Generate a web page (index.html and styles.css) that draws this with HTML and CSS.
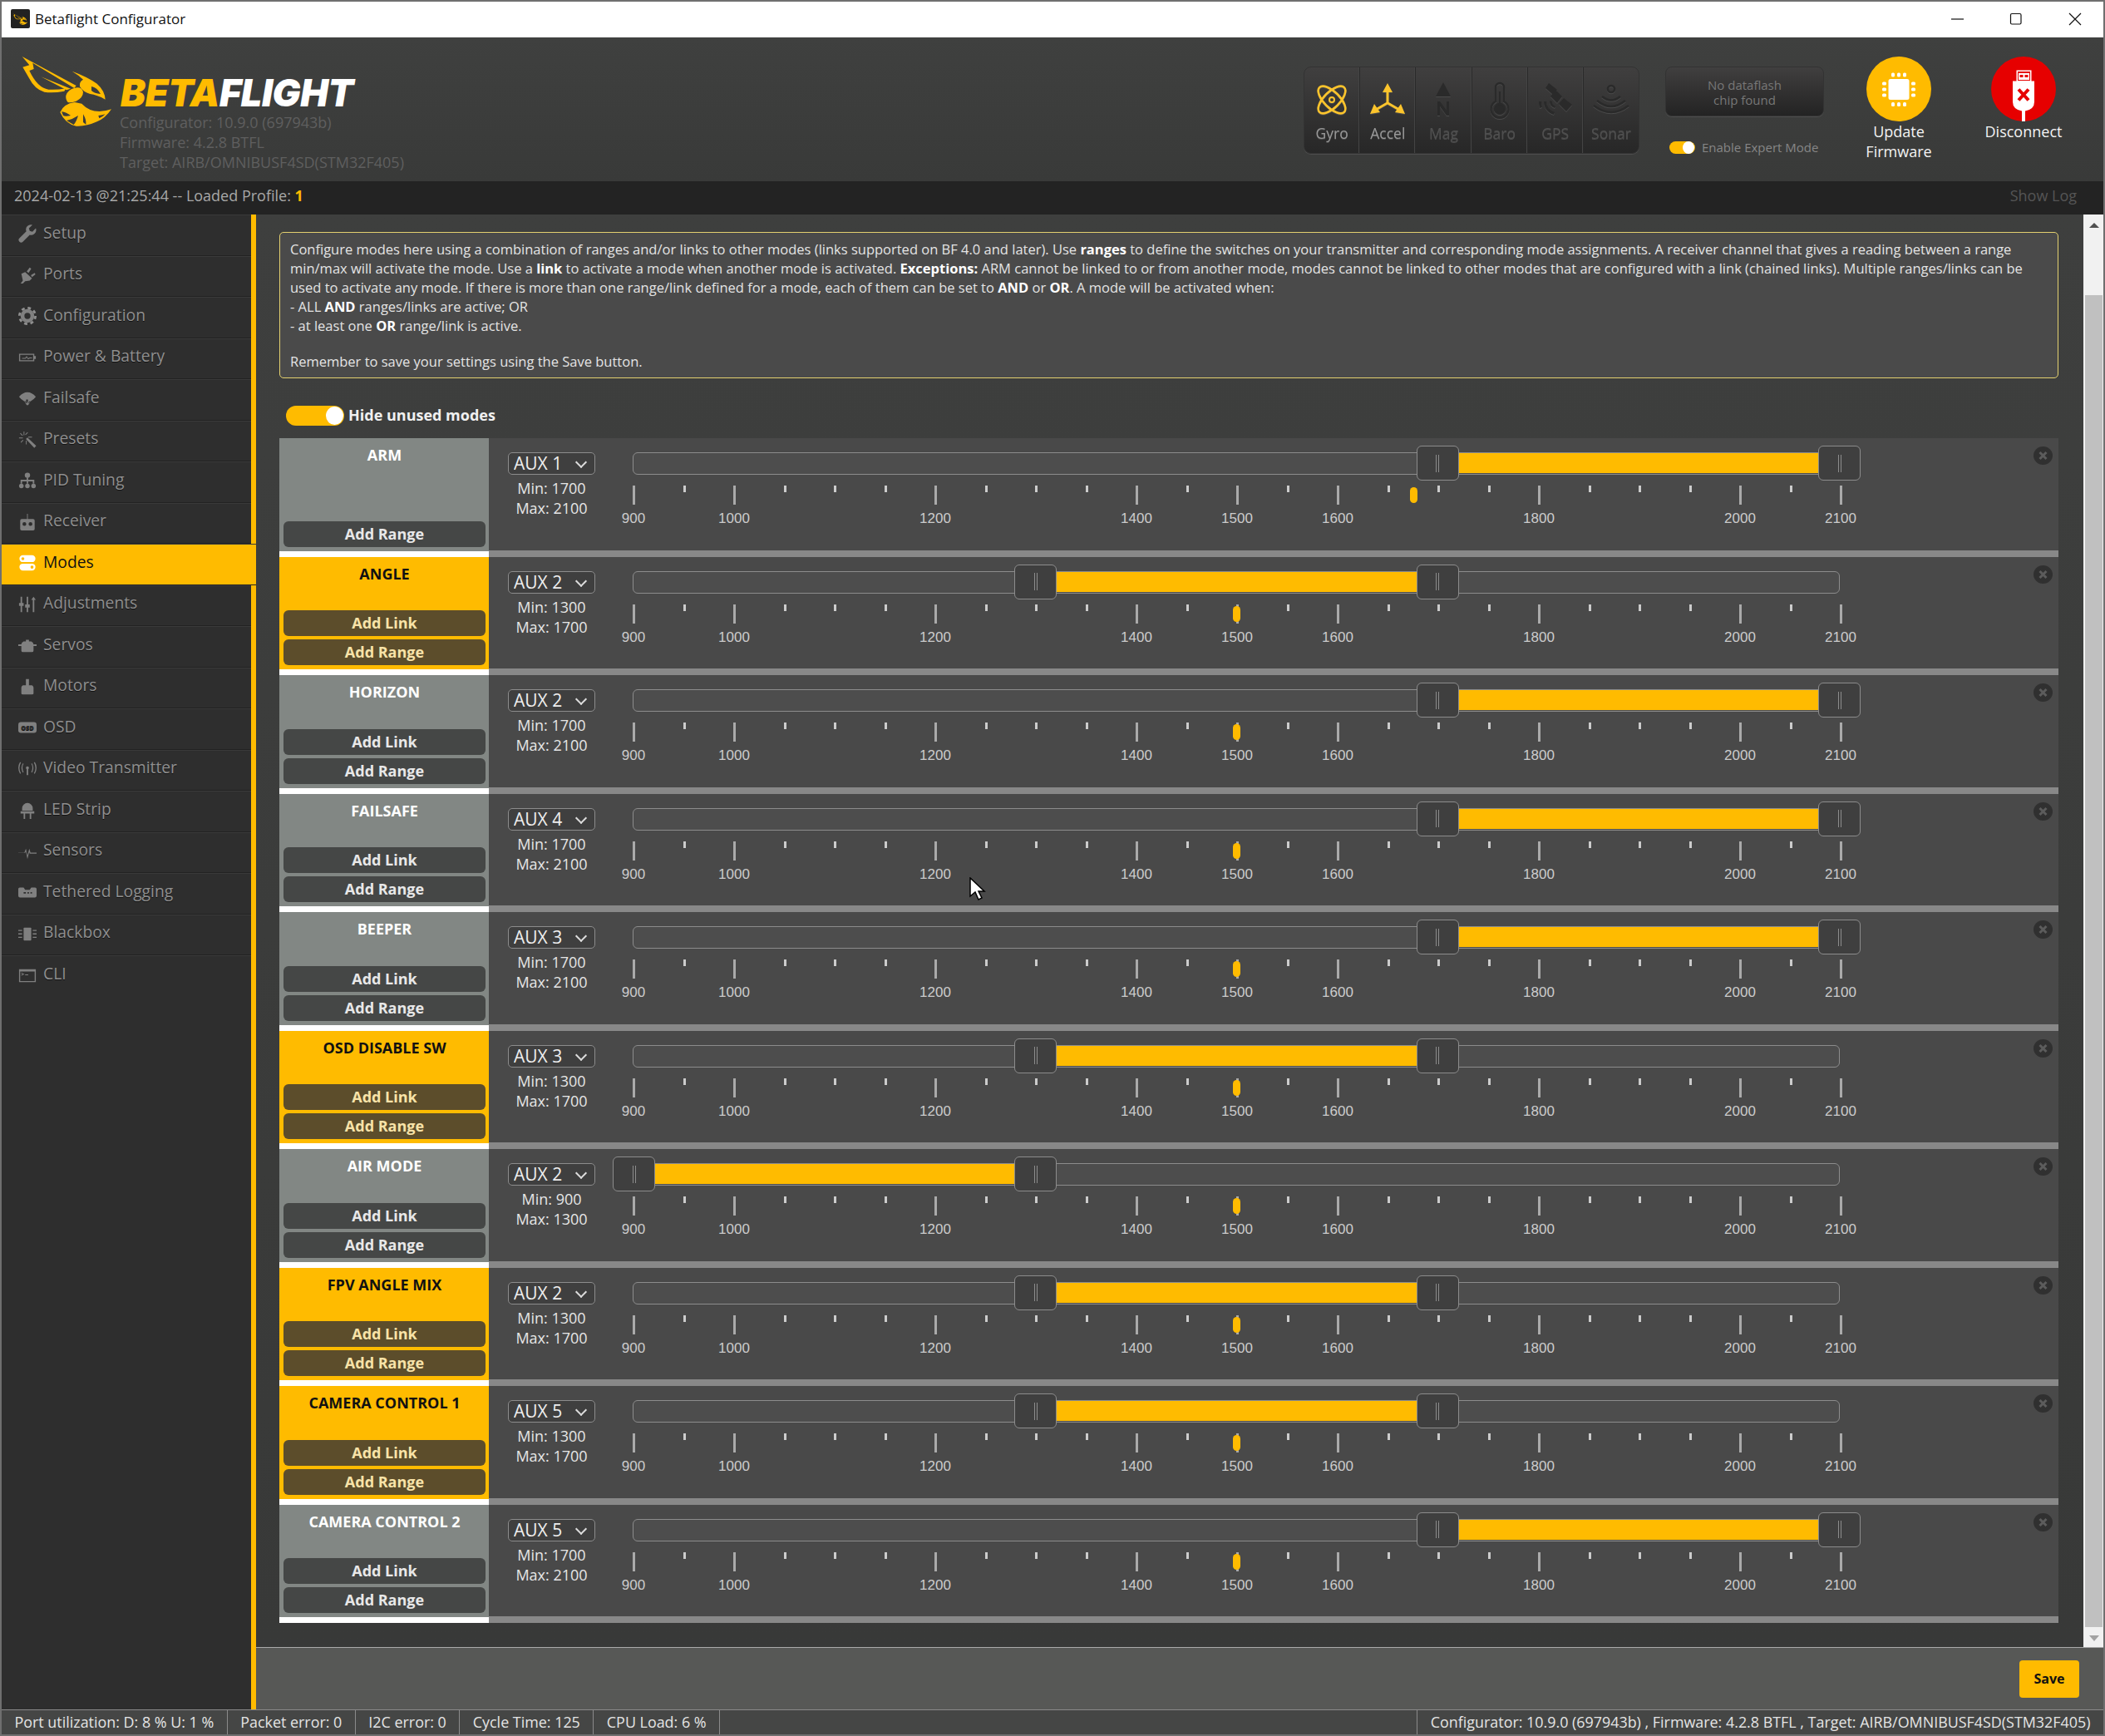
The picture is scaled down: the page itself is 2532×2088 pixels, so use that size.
FILE: index.html
```html
<!DOCTYPE html>
<html lang="en">
<head>
  <meta charset="UTF-8" />
  <title>Betaflight Configurator</title>
  <link rel="stylesheet" href="styles.css">
</head>
<body>

  <div class="titlebar">
    <span class="app-icon">
      <svg viewBox="0 0 375 300" width="20" height="16"><use href="#bee"/></svg>
    </span>
    <span class="app-title">Betaflight Configurator</span>
    <span class="win-btn"><svg width="16" height="16" viewBox="0 0 16 16"><path d="M0 8h15" stroke="#111" stroke-width="1.2"/></svg></span>
    <span class="win-btn"><svg width="16" height="16" viewBox="0 0 16 16"><rect x="1.5" y="1.5" width="12.5" height="12.5" rx="1.5" fill="none" stroke="#111" stroke-width="1.2"/></svg></span>
    <span class="win-btn"><svg width="16" height="16" viewBox="0 0 16 16"><path d="M1 1l14 14M15 1L1 15" stroke="#111" stroke-width="1.2"/></svg></span>
  </div>

  <header class="topbar">
    <svg class="bee" viewBox="0 0 375 300" width="125" height="100">
      <defs>
        <g id="bee">
          <path fill="#ffbb00" d="M20 27L215 132 208 141 58 50 62 72 46 78Q75 140 115 146 145 148 178 142L172 152Q130 160 100 155 65 145 45 105L22 65 46 58Z"/>
          <path fill="#ffbb00" d="M88 100L195 143 180 148Z"/>
          <path fill="#ffbb00" d="M200 80Q255 100 290 125 318 150 320 182 290 165 265 162 240 155 228 135 225 118 240 110 225 95 200 80Z"/>
          <path fill="#3b3c3b" d="M270 135Q290 138 303 162 280 160 270 150Z"/>
          <path fill="#ffbb00" d="M178 168Q185 145 210 140 235 135 240 155 240 175 215 188 195 195 185 192 176 182 178 168Z"/>
          <path fill="#ffbb00" d="M157 228Q170 197 210 192L235 197Q275 240 342 217 320 250 290 262 250 280 215 278 175 270 157 228Z"/>
          <path fill="#3b3c3b" d="M162 226Q180 228 195 240 175 245 168 240ZM180 258Q205 252 222 240 216 262 206 273ZM240 235Q252 255 250 272L240 264ZM295 240Q310 238 320 235 310 245 298 250Z"/>
        </g>
      </defs>
      <use href="#bee"/>
    </svg>
    <div class="brand">
      <div class="wordmark"><span class="beta">BETA</span>FLIGHT</div>
      <div class="versions">
        Configurator: 10.9.0 (697943b)<br>
        Firmware: 4.2.8 BTFL<br>
        Target: AIRB/OMNIBUSF4SD(STM32F405)
      </div>
    </div>

    <div class="sensors">
      <div class="sensor on">
        <svg viewBox="0 0 48 48" width="48" height="48" fill="none" stroke="currentColor" stroke-width="2.6">
          <ellipse cx="24" cy="24" rx="9.5" ry="21" transform="rotate(45 24 24)"/>
          <ellipse cx="24" cy="24" rx="9.5" ry="21" transform="rotate(-45 24 24)"/>
          <circle cx="24" cy="24" r="3" stroke-width="2"/>
        </svg>
        <span>Gyro</span>
      </div>
      <div class="sensor on">
        <svg viewBox="0 0 48 48" width="48" height="48" fill="currentColor">
          <path d="M22.5 13h3v14l13 7.500-1.500 2.500L24 29.500 11 37l-1.500-2.500 13-7.500z"/>
          <path d="M24 4l6 11H18zM3 41l5-12 7 10zM45 41l-12-2 7-10z"/>
        </svg>
        <span>Accel</span>
      </div>
      <div class="sensor">
        <svg viewBox="0 0 48 48" width="48" height="48" fill="currentColor">
          <path d="M24 3l9 17H15z"/>
          <path d="M17 43V26h3l8 11V26h3v17h-3l-8-11v11z"/>
        </svg>
        <span>Mag</span>
      </div>
      <div class="sensor">
        <svg viewBox="0 0 48 48" width="48" height="48" fill="none" stroke="currentColor" stroke-width="2.4">
          <path d="M19 26V9a5 5 0 0 1 10 0v17a10.500 10.500 0 1 1-10 0z"/>
          <circle cx="24" cy="35" r="6" fill="currentColor"/>
          <path d="M24 14v16"/>
        </svg>
        <span>Baro</span>
      </div>
      <div class="sensor">
        <svg viewBox="0 0 48 48" width="48" height="48" fill="currentColor">
          <path d="M16 4l10 8-5 6-9-8zM34 22l10 8-7 8-9-9zM24 12l8 8-6 8-8-8z"/>
          <path d="M20 26a6 6 0 0 0 4 6l-1 2a9 9 0 0 1-6-9zM13 26a13 13 0 0 0 10 13l-1 3A16 16 0 0 1 10 26zM7 26a19 19 0 0 0 1 7l-3 1a22 22 0 0 1-1-8z"/>
        </svg>
        <span>GPS</span>
      </div>
      <div class="sensor">
        <svg viewBox="0 0 48 48" width="48" height="48" fill="none" stroke="currentColor" stroke-width="2.6">
          <circle cx="24" cy="11" r="4"/>
          <path d="M13 20q11 9 22 0M7 25q17 14 34 0M3 31q21 16 42 0"/>
        </svg>
        <span>Sonar</span>
      </div>
    </div>

    <div class="flash-box">
      <div class="flash-note">No dataflash<br>chip found</div>
      <label class="expert"><span class="switch small"><i></i></span>Enable Expert Mode</label>
    </div>

    <div class="round-btn firmware">
      <svg viewBox="0 0 78 78" width="78" height="78">
        <circle cx="39" cy="39" r="39" fill="#ffbb00"/>
        <rect x="26.500" y="27" width="25" height="25" rx="2.500" fill="#fff"/>
        <g fill="#fff">
          <rect x="30" y="19.500" width="4" height="5" rx="1.500"/><rect x="37" y="19.500" width="4" height="5" rx="1.500"/><rect x="44" y="19.500" width="4" height="5" rx="1.500"/>
          <rect x="30" y="55" width="4" height="5" rx="1.500"/><rect x="37" y="55" width="4" height="5" rx="1.500"/><rect x="44" y="55" width="4" height="5" rx="1.500"/>
          <rect x="19" y="30.500" width="5" height="4" rx="1.500"/><rect x="19" y="37.500" width="5" height="4" rx="1.500"/><rect x="19" y="44.500" width="5" height="4" rx="1.500"/>
          <rect x="54" y="30.500" width="5" height="4" rx="1.500"/><rect x="54" y="37.500" width="5" height="4" rx="1.500"/><rect x="54" y="44.500" width="5" height="4" rx="1.500"/>
        </g>
      </svg>
      <span>Update<br>Firmware</span>
    </div>
    <div class="round-btn disconnect">
      <svg viewBox="0 0 78 78" width="78" height="78">
        <circle cx="39" cy="39" r="39" fill="#e60000"/>
        <path fill="#fff" d="M30.500 16.500h18v13h3.500v25q0 9-11 11V78h-4V65.500q-11-2-11-11v-25h4.500z"/>
        <path fill="#e60000" d="M32 18h15v11H32z"/>
        <path fill="#fff" d="M33 20h13v8H33z"/>
        <path fill="#e60000" d="M34.500 22h4v3h-4zM40.500 22h4v3h-4z"/>
        <path d="M33 39.500l12 13M45 39.500l-12 13" stroke="#e60000" stroke-width="4"/>
      </svg>
      <span>Disconnect</span>
    </div>
  </header>

  <div class="logbar">
    <span>2024-02-13 @21:25:44 -- Loaded Profile: <b>1</b></span>
    <span class="showlog">Show Log</span>
  </div>

  <div class="main">
    <nav class="sidebar">
      <a class="nav-item"><svg viewBox="0 0 24 24"><path d="M23 5l-4.500 4.500L15 8.500 14 5l4.500-4.500a6.500 6.500 0 0 0-8 8.500L1.500 18a3 3 0 0 0 4.500 4.500l9-9a6.500 6.500 0 0 0 8-8.500z"/></svg>Setup</a>
      <a class="nav-item"><svg viewBox="0 0 24 24"><path d="M3 23l3-4-2-9 5-2 9 8-3 3-6 1-3 3zM11 7l4-5 2 1.500-3.500 5.500zM16.500 12l5-3 1 2-4.500 3.500z"/></svg>Ports</a>
      <a class="nav-item"><svg viewBox="0 0 24 24"><circle cx="12" cy="12" r="10.500" fill="none" stroke="currentColor" stroke-width="3" stroke-dasharray="4.200 4.050"/><path fill-rule="evenodd" d="M12 3a9 9 0 1 1 0 18 9 9 0 0 1 0-18zm0 5a4 4 0 1 0 0 8 4 4 0 0 0 0-8z"/></svg>Configuration</a>
      <a class="nav-item"><svg viewBox="0 0 24 24"><path fill-rule="evenodd" d="M1 7h20v3h2v4h-2v3H1zm1.500 1.500v7h17v-7z"/><path d="M5 12.500h4l2-2.500 2 3 1.500-1H18v1h-3l-2 1.500-2-2.500-1.500 1.500H5z"/></svg>Power &amp; Battery</a>
      <a class="nav-item"><svg viewBox="0 0 24 24"><path fill-rule="evenodd" d="M1 10Q6 4 12 4t11 6q-3 4-7 6l-3 5h-2l-3-5q-4-2-7-6zm7 6h2l1 3zm8 0h-2l-1 3zm-6-2l1 4 1 0 1-4q-1.500-.500-3 0z"/></svg>Failsafe</a>
      <a class="nav-item"><svg viewBox="0 0 24 24"><path d="M10 11l2-2 11.500 11-2.500 2.500zM7 1h1v5H7zM1 9h5v1H1zM9 5l3-3 .700.700-3 3zM3 3l3 3-.700.700-3-3zM6 12l.700.700-3 3-.700-.700zM10 13h1v5h-1zM13 8h5v1h-5z"/></svg>Presets</a>
      <a class="nav-item"><svg viewBox="0 0 24 24"><path d="M11 8h2v3h8v5h-2v-3h-6v3h-2v-3H5v3H3v-5h8z"/><circle cx="12" cy="5" r="3.500"/><circle cx="4" cy="19" r="3"/><circle cx="12" cy="19" r="3"/><circle cx="20" cy="19" r="3"/></svg>PID Tuning</a>
      <a class="nav-item"><svg viewBox="0 0 24 24"><path fill-rule="evenodd" d="M11.500 1h1v7h7a2 2 0 0 1 2 2v11a2 2 0 0 1-2 2h-15a2 2 0 0 1-2-2V10a2 2 0 0 1 2-2h7zM8 12a2.500 2.500 0 1 0 0 5 2.500 2.500 0 0 0 0-5zm8 0a2.500 2.500 0 1 0 0 5 2.500 2.500 0 0 0 0-5z"/></svg>Receiver</a>
      <a class="nav-item active"><svg viewBox="0 0 24 24"><path fill-rule="evenodd" d="M6 2h12a4.500 4.500 0 0 1 0 9H6a4.500 4.500 0 0 1 0-9zm0 2.500a2 2 0 1 0 0 4 2 2 0 0 0 0-4zM6 13h12a4.500 4.500 0 0 1 0 9H6a4.500 4.500 0 0 1 0-9zm12 2.500a2 2 0 1 0 0 4 2 2 0 0 0 0-4z" fill="#fff"/></svg>Modes</a>
      <a class="nav-item"><svg viewBox="0 0 24 24"><path d="M3 2h2v8h2v4H5v8H3v-8H1v-4h2zM11 2h2v10h2v4h-2v6h-2v-6H9v-4h2zM19 6h-2l3-4 3 4h-2v16h-2z"/></svg>Adjustments</a>
      <a class="nav-item"><svg viewBox="0 0 24 24"><path d="M10 5h4v2h3q3 1 3 4h4v2h-4v6q0 2-2 2H6q-2 0-2-2v-6H0v-2h4q0-3 3-4h3z"/></svg>Servos</a>
      <a class="nav-item"><svg viewBox="0 0 24 24"><path d="M10 2h4v8h4q2 1 2 3v8q0 1-2 1H6q-2 0-2-1v-8q0-2 2-3h4z"/></svg>Motors</a>
      <a class="nav-item"><svg viewBox="0 0 24 24"><rect y="5" width="24" height="14" rx="3.500"/><text x="12" y="15.500" text-anchor="middle" class="osd-tag">OSD</text></svg>OSD</a>
      <a class="nav-item"><svg viewBox="0 0 24 24"><path d="M10 10.500a2 2 0 1 1 4 0q0 1-1 1.500v8h-2v-8q-1-.500-1-1.500zM7 5q-3 5 0 11l-1.200.500Q2.500 11 5.800 4.500zM3.500 3.500q-4 7 0 14l-1.200.700q-4.500-8 0-15.400zM17 5q3 5 0 11l1.200.500Q21.500 11 18.200 4.500zM20.500 3.500q4 7 0 14l1.200.700q4.500-8 0-15.400z"/></svg>Video Transmitter</a>
      <a class="nav-item"><svg viewBox="0 0 24 24"><path d="M5 10a7 7 0 0 1 14 0v3H5zM3 14h18v3H3zM7 17h2v7H7zM15 17h2v7h-2z"/></svg>LED Strip</a>
      <a class="nav-item"><svg viewBox="0 0 24 24"><path d="M0 13.500h8l2-5 2 9 2.500-9 1.500 5h8v1.500h-9l-.700-2-2.300 9-2-10-1 2H0z"/></svg>Sensors</a>
      <a class="nav-item"><svg viewBox="0 0 24 24"><path fill-rule="evenodd" d="M2 6h5l2 3h6l2-3h5q2 0 2 2v9q0 2-2 2H2q-2 0-2-2V8q0-2 2-2zm5 6v2h3v-2zm5 0v2h2v-2zm4 0v2h2v-2z"/></svg>Tethered Logging</a>
      <a class="nav-item"><svg viewBox="0 0 24 24"><rect x="7" y="4" width="10" height="17" rx="1"/><path d="M0 7h5v1.500H0zM0 11.500h5V13H0zM0 16h5v1.500H0zM19 7h5v1.500h-5zM19 11.500h5V13h-5zM19 16h5v1.500h-5z"/></svg>Blackbox</a>
      <a class="nav-item"><svg viewBox="0 0 24 24"><path fill-rule="evenodd" d="M1 4h22v17H1zm1.500 3v12.500h19V7z"/><path d="M4 8.500l4 2-4 2v-1l2-1-2-1zM9 11h4v1H9z"/></svg>CLI</a>
    </nav>

    <div class="content">
      <div class="scroll-area">
        <div class="tab-body">
          <div class="note">
            Configure modes here using a combination of ranges and/or links to other modes (links supported on BF 4.0 and later). Use <b>ranges</b> to define the switches on your transmitter and corresponding mode assignments. A receiver channel that gives a reading between a range<br>
            min/max will activate the mode. Use a <b>link</b> to activate a mode when another mode is activated. <b>Exceptions:</b> ARM cannot be linked to or from another mode, modes cannot be linked to other modes that are configured with a link (chained links). Multiple ranges/links can be<br>
            used to activate any mode. If there is more than one range/link defined for a mode, each of them can be set to <b>AND</b> or <b>OR</b>. A mode will be activated when:<br>
            - ALL <b>AND</b> ranges/links are active; OR<br>
            - at least one <b>OR</b> range/link is active.<br>
            <span class="note-last">Remember to save your settings using the Save button.</span>
          </div>

          <label class="hide-unused"><span class="switch"><i></i></span><span class="hide-text">Hide unused modes</span></label>

          <div id="modes"></div>
        </div>
        <div class="scrollbar">
          <span class="arrow up"></span>
          <span class="thumb"></span>
          <span class="arrow down"></span>
        </div>
      </div>
      <div class="toolbar"><a class="save-btn">Save</a></div>
    </div>
  </div>

  <footer class="statusbar">
    <span class="stat">Port utilization: D: 8 % U: 1 %</span>
    <span class="stat">Packet error: 0</span>
    <span class="stat">I2C error: 0</span>
    <span class="stat">Cycle Time: 125</span>
    <span class="stat">CPU Load: 6 %</span>
    <span class="stat version">Configurator: 10.9.0 (697943b) , Firmware: 4.2.8 BTFL , Target: AIRB/OMNIBUSF4SD(STM32F405)</span>
  </footer>

  <svg class="cursor" width="20" height="28" viewBox="0 0 20 28"><path d="M1 1v22l6-5 4 9 4-2-4-8h7z" fill="#fff" stroke="#000" stroke-width="1.500"/></svg>

  <script src="script.js"></script>
</body>
</html>
```

FILE: styles.css
```css
* {
  box-sizing: border-box;
}
html, body {
  margin: 0;
  height: 100%;
}
body {
  width: 2532px;
  height: 2088px;
  display: flex;
  flex-direction: column;
  border: 2px solid #6f6f6f;
  font-family: "Open Sans", "Noto Sans", sans-serif;
  font-size: 16px;
  color: #ddd;
  background: #3b3c3b;
  position: relative;
  overflow: hidden;
}

/* window title */
.titlebar {
  height: 43px;
  flex: none;
  background: #fff;
  display: flex;
  align-items: center;
  padding: 0 0 2px 11px;
  color: #111;
  font-size: 17px;
}
.app-icon {
  width: 23px;
  height: 23px;
  background: #222;
  border-radius: 2px;
  display: flex;
  align-items: center;
  justify-content: center;
  margin-right: 6px;
}
.app-title {
  flex: 1;
}
.win-btn {
  width: 70.5px;
  display: flex;
  justify-content: center;
}
.win-btn:last-child {
  margin-right: -1px;
}
.win-btn svg {
  display: block;
}

/* top header */
.topbar {
  height: 173px;
  flex: none;
  display: flex;
  background: linear-gradient(#3f403f, #393a39);
  position: relative;
}
.bee {
  margin: 14px 0 0 18px;
  flex: none;
}
.brand {
  margin: 49px 0 0 0;
  width: 1423px;
  flex: none;
}
.wordmark {
  font-family: "Inter", "Liberation Sans", sans-serif;
  font-weight: 900;
  font-style: italic;
  font-size: 45px;
  line-height: 36px;
  letter-spacing: -0.4px;
  color: #fff;
}
.beta {
  color: #ffbb00;
}
.versions {
  margin: 5px 0 0 -1px;
  font-size: 18px;
  line-height: 24px;
  color: #5f5f5f;
}
.sensors {
  margin-top: 35px;
  width: 404px;
  height: 105px;
  display: flex;
  flex: none;
  border-radius: 9px;
  border: 1px solid #333;
  box-shadow: 0 1px 0 #4d4d4d;
  background: linear-gradient(#403f3f, #272727);
  overflow: hidden;
}
.sensor {
  flex: 1;
  display: flex;
  flex-direction: column;
  align-items: center;
  padding-top: 15px;
  border-right: 1px solid #2a2a2a;
  box-shadow: inset -1px 0 0 #444;
  color: #2a2a2a;
  filter: drop-shadow(0 1px 0 #4a4a4a);
  font-size: 17.5px;
}
.sensor:last-child {
  border-right: 0;
  box-shadow: none;
}
.sensor span {
  margin-top: 4px;
  color: #4f4f4f;
}
.sensor.on {
  color: #fcc42c;
}
.sensor.on span {
  color: #999;
}
.flash-box {
  margin: 35px 0 0 31px;
  width: 191px;
  flex: none;
}
.flash-note {
  height: 60px;
  border-radius: 8px;
  border: 1px solid #333;
  box-shadow: 0 1px 0 #4d4d4d;
  background: linear-gradient(#403f3f, #232323);
  color: #777;
  font-size: 15px;
  line-height: 18px;
  text-align: center;
  padding-top: 12px;
}
.expert {
  display: flex;
  align-items: center;
  margin: 27px 0 0 5px;
  color: #868686;
  font-size: 15px;
  gap: 8px;
}
.round-btn {
  width: 150px;
  margin-top: 23px;
  display: flex;
  flex-direction: column;
  align-items: center;
  color: #f3f3f3;
  font-size: 18px;
  line-height: 23.5px;
  text-align: center;
  flex: none;
}
.round-btn svg {
  display: block;
  margin-bottom: 1px;
}
.round-btn span {
  display: block;
}
.firmware {
  margin-left: 15px;
}

/* switches */
.switch {
  width: 70px;
  height: 24px;
  border-radius: 12px;
  background: #ffbb00;
  display: flex;
  justify-content: flex-end;
  align-items: center;
  padding-right: 1px;
  flex: none;
}
.switch i {
  width: 21px;
  height: 22px;
  background: #fff;
  border-radius: 50%;
  display: block;
}
.switch.small {
  width: 31px;
  height: 15px;
  border-radius: 8px;
}
.switch.small i {
  width: 14px;
  height: 15px;
}

/* log bar */
.logbar {
  height: 40px;
  flex: none;
  background: #232323;
  display: flex;
  justify-content: space-between;
  align-items: center;
  padding: 0 32px 7px 15px;
  font-size: 18px;
  color: #a8a8a8;
}
.logbar b {
  color: #ffbb00;
}
.showlog {
  color: #555;
}

/* sidebar */
.main {
  flex: 1;
  display: flex;
  min-height: 0;
}
.sidebar {
  width: 306px;
  flex: none;
  background: #2e2e2e;
  border-right: 6px solid #ffbb00;
}
.nav-item {
  height: 49.5px;
  display: flex;
  align-items: center;
  padding: 0 0 7px 20px;
  gap: 8px;
  border-top: 1px solid #3a3a3a;
  border-bottom: 1px solid #222;
  color: #8f8f8f;
  font-size: 19.3px;
  text-shadow: 0 1px 0 #111;
}
.nav-item svg {
  width: 22px;
  height: 22px;
  fill: #808080;
  flex: none;
  margin-top: 4px;
}
.nav-item:last-child {
  border-bottom: 0;
}
.nav-item.active {
  background: #ffbb00;
  color: #111;
  margin-right: -6px;
  text-shadow: none;
}
.osd-tag {
  font: 800 8px "Open Sans", sans-serif;
  fill: #2e2e2e;
}

/* tab content */
.content {
  flex: 1;
  display: flex;
  flex-direction: column;
  min-width: 0;
}
.scroll-area {
  flex: 1;
  display: flex;
  min-height: 0;
  background: linear-gradient(#3e3f3e, #383938);
}
.tab-body {
  flex: 1;
  padding: 21px 30px 0 28px;
  min-width: 0;
  overflow: hidden;
}
.note {
  height: 176px;
  background: #4a4a4a;
  border: 1px solid #e3d06f;
  border-radius: 5px;
  padding: 8px 12px;
  font-size: 16.5px;
  line-height: 23px;
  color: #e4e4e4;
  white-space: nowrap;
}
.note b {
  color: #fff;
}
.note-last {
  display: block;
  margin-top: 20px;
}
.hide-unused {
  display: flex;
  align-items: center;
  gap: 5px;
  margin: 33px 0 15px 8px;
  color: #f0f0f0;
  font-weight: 700;
  font-size: 18px;
  height: 24px;
}
.hide-text {
  margin-top: -2px;
}

/* mode rows */
.mode {
  height: 142.5px;
  display: flex;
  background: #494949;
  border-bottom: 8px solid #888;
  position: relative;
}
.mode-cell {
  width: 252px;
  height: 142.5px;
  flex: none;
  border-bottom: 7px solid #fff;
  background: #828784;
  display: flex;
  flex-direction: column;
  padding: 0 4px 5px 5px;
  gap: 4px;
  color: #fff;
  font-weight: 700;
  font-size: 18px;
}
.mode-name {
  text-align: center;
  margin: 8px 0 auto;
  line-height: 24px;
}
.mode-btn {
  height: 31px;
  border-radius: 6px;
  background: #454746;
  color: #e8e8e8;
  text-align: center;
  line-height: 30px;
}
.mode.active .mode-cell {
  background: #ffbb00;
}
.mode.active .mode-name {
  color: #111;
}
.mode.active .mode-btn {
  background: #5c4d2b;
  color: #f8e3a8;
}
.range-info {
  width: 105px;
  margin: 17px 0 0 23px;
  flex: none;
}
.aux-wrap {
  position: relative;
  height: 27px;
}
.aux-wrap::after {
  content: "";
  position: absolute;
  right: 12px;
  top: 7px;
  width: 8px;
  height: 8px;
  border-right: 2px solid #ddd;
  border-bottom: 2px solid #ddd;
  transform: rotate(45deg);
}
.aux {
  appearance: none;
  display: block;
  width: 100%;
  height: 27px;
  border: 1px solid #8c8c8c;
  border-radius: 5px;
  background: #3f3f3f;
  color: #eee;
  font-family: inherit;
  font-size: 21px;
  line-height: 25px;
  padding: 0 0 1px 6px;
}
.range-values {
  margin-top: 4px;
  text-align: center;
  font-size: 18px;
  line-height: 24px;
  color: #e6e6e6;
}
.slider {
  width: 1452px;
  margin: 17px 0 0 45px;
  flex: none;
}
.track {
  position: relative;
  height: 27px;
  border: 1px solid #8c8c8c;
  border-radius: 6px;
  background: #4d4d4d;
}
.fill {
  position: absolute;
  top: 0;
  bottom: 1px;
  background: #ffbb00;
}
.handle {
  position: absolute;
  top: -9px;
  width: 51px;
  height: 42px;
  margin-left: -25px;
  border: 1px solid #8c8c8c;
  border-radius: 6px;
  background: #3f3f3f;
  display: flex;
  justify-content: center;
  align-items: center;
  gap: 2px;
}
.handle i {
  width: 1px;
  height: 21px;
  background: #8c8c8c;
}
.scale {
  position: relative;
  height: 70px;
}
.tick {
  position: absolute;
  top: 13px;
  width: 3px;
  height: 8px;
  background: #ccc;
}
.tick.major {
  height: 23px;
  background: #aaa;
}
.pip-label {
  position: absolute;
  top: 43px;
  margin-left: 1px;
  transform: translateX(-50%);
  font-family: "Liberation Sans", Arial, sans-serif;
  font-size: 17px;
  line-height: 20px;
  color: #ccc;
}
.marker {
  position: absolute;
  top: 15px;
  width: 9px;
  height: 19px;
  margin-left: -4px;
  border-radius: 5px;
  background: #ffbb00;
}
.remove {
  position: absolute;
  right: 7px;
  top: 10px;
  width: 23px;
  height: 22px;
}

/* scrollbar */
.scrollbar {
  width: 24px;
  flex: none;
  background: #f1f1f1;
  display: flex;
  flex-direction: column;
  align-items: center;
  padding: 0 1px 0 2px;
}
.thumb {
  display: block;
  width: 100%;
  flex: 1;
  margin-top: 97px;
  background: #c0c0c0;
}
.arrow {
  display: block;
  flex: none;
  border-left: 6px solid transparent;
  border-right: 6px solid transparent;
}
.arrow.up {
  margin-top: 10px;
  border-bottom: 6px solid #505050;
  height: 6px;
  position: absolute;
}
.arrow.down {
  margin: 10px 0 7px;
  border-top: 7px solid #a3a3a3;
}

/* bottom */
.toolbar {
  height: 75px;
  flex: none;
  background: #575856;
  border-top: 1px solid #aaa;
  display: flex;
  justify-content: flex-end;
  align-items: flex-start;
  padding: 15px 29px 0 0;
}
.save-btn {
  width: 72px;
  height: 45px;
  background: #ffbb00;
  border-radius: 4px;
  color: #111;
  font-weight: 700;
  font-size: 16px;
  text-align: center;
  line-height: 44px;
}
.statusbar {
  height: 30px;
  flex: none;
  display: flex;
  background: #454645;
  border-top: 1px solid #8a8a8a;
  font-size: 17.9px;
  color: #e4e4e4;
  line-height: 28px;
}
.stat {
  padding: 0 15.5px;
  border-right: 1px solid #8a8a8a;
}
.stat.version {
  margin-left: auto;
  border-right: 0;
  border-left: 1px solid #8a8a8a;
}
.cursor {
  position: absolute;
  left: 1164px;
  top: 1053px;
}
```

FILE: script.js
```js
const modes = [
  { name: 'ARM', aux: 1, min: 1700, max: 2100, active: false, link: false, marker: 1676 },
  { name: 'ANGLE', aux: 2, min: 1300, max: 1700, active: true, link: true, marker: 1500 },
  { name: 'HORIZON', aux: 2, min: 1700, max: 2100, active: false, link: true, marker: 1500 },
  { name: 'FAILSAFE', aux: 4, min: 1700, max: 2100, active: false, link: true, marker: 1500 },
  { name: 'BEEPER', aux: 3, min: 1700, max: 2100, active: false, link: true, marker: 1500 },
  { name: 'OSD DISABLE SW', aux: 3, min: 1300, max: 1700, active: true, link: true, marker: 1500 },
  { name: 'AIR MODE', aux: 2, min: 900, max: 1300, active: false, link: true, marker: 1500 },
  { name: 'FPV ANGLE MIX', aux: 2, min: 1300, max: 1700, active: true, link: true, marker: 1500 },
  { name: 'CAMERA CONTROL 1', aux: 5, min: 1300, max: 1700, active: true, link: true, marker: 1500 },
  { name: 'CAMERA CONTROL 2', aux: 5, min: 1700, max: 2100, active: false, link: true, marker: 1500 }
];

const majors = [900, 1000, 1200, 1400, 1500, 1600, 1800, 2000, 2100];

function pct(v) {
  return ((v - 900) / 1200) * 100;
}

function buildScale(marker) {
  let html = '';
  for (let v = 900; v <= 2100; v += 50) {
    const major = majors.includes(v);
    html += `<span class="tick${major ? ' major' : ''}" style="left:${pct(v)}%"></span>`;
    if (major) {
      html += `<span class="pip-label" style="left:${pct(v)}%">${v}</span>`;
    }
  }
  html += `<span class="marker" style="left:${pct(marker)}%"></span>`;
  return html;
}

const options = [1, 2, 3, 4, 5];

document.getElementById('modes').innerHTML = modes.map(m => `
  <div class="mode${m.active ? ' active' : ''}">
    <div class="mode-cell">
      <div class="mode-name">${m.name}</div>
      ${m.link ? '<div class="mode-btn">Add Link</div>' : ''}
      <div class="mode-btn">Add Range</div>
    </div>
    <div class="range-info">
      <div class="aux-wrap">
        <select class="aux">
          ${options.map(o => `<option${o === m.aux ? ' selected' : ''}>AUX ${o}</option>`).join('')}
        </select>
      </div>
      <div class="range-values">Min: ${m.min}<br>Max: ${m.max}</div>
    </div>
    <div class="slider">
      <div class="track">
        <span class="fill" style="left:${pct(m.min)}%;width:${pct(m.max) - pct(m.min)}%"></span>
        <span class="handle" style="left:${pct(m.min)}%"><i></i><i></i></span>
        <span class="handle" style="left:${pct(m.max)}%"><i></i><i></i></span>
      </div>
      <div class="scale">${buildScale(m.marker)}</div>
    </div>
    <svg class="remove" viewBox="0 0 23 22">
      <ellipse cx="11.500" cy="11" rx="11.500" ry="11" fill="#303030"/>
      <path d="M7.500 7l8 8M15.500 7l-8 8" stroke="#5c5c5c" stroke-width="3"/>
    </svg>
  </div>`).join('');
```
